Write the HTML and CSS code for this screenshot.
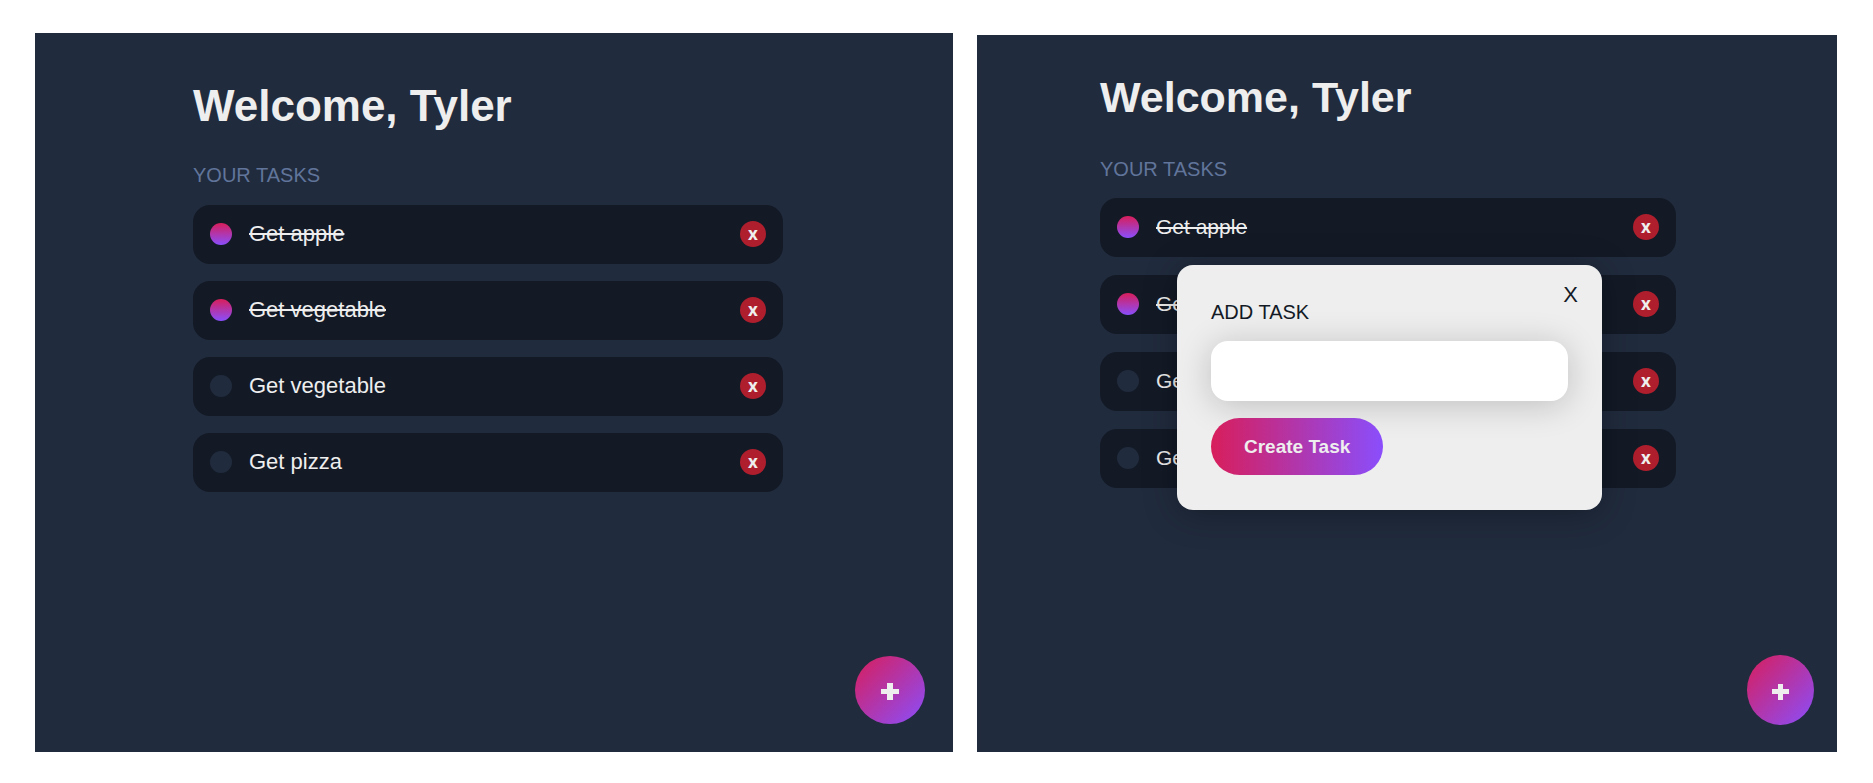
FILE: index.html
```html
<!DOCTYPE html>
<html lang="en">
<head>
<meta charset="utf-8">
<meta name="viewport" content="width=device-width, initial-scale=1">
<title>Tasks</title>
<link rel="stylesheet" href="styles.css">
</head>
<body>
<main class="screens">
  <section class="app">
    <h1 class="welcome">Welcome, Tyler</h1>
    <h2 class="subtitle">Your tasks</h2>
    <ul class="tasks">
      <li class="task"><input class="check" type="checkbox" id="a1" checked><label class="text" for="a1">Get apple</label><button class="delete" type="button" aria-label="Delete">x</button></li>
      <li class="task"><input class="check" type="checkbox" id="a2" checked><label class="text" for="a2">Get vegetable</label><button class="delete" type="button" aria-label="Delete">x</button></li>
      <li class="task"><input class="check" type="checkbox" id="a3"><label class="text" for="a3">Get vegetable</label><button class="delete" type="button" aria-label="Delete">x</button></li>
      <li class="task"><input class="check" type="checkbox" id="a4"><label class="text" for="a4">Get pizza</label><button class="delete" type="button" aria-label="Delete">x</button></li>
    </ul>
    <button class="add" type="button" aria-label="Add task"><svg class="plus" viewBox="0 0 18 18" aria-hidden="true"><path d="M6 0h6v6h6v5h-6v6H6v-6H0V6h6z"/></svg></button>
  </section>

  <section class="app app-adding">
    <h1 class="welcome">Welcome, Tyler</h1>
    <h2 class="subtitle">Your tasks</h2>
    <ul class="tasks">
      <li class="task"><input class="check" type="checkbox" id="b1" checked><label class="text" for="b1">Get apple</label><button class="delete" type="button" aria-label="Delete">x</button></li>
      <li class="task"><input class="check" type="checkbox" id="b2" checked><label class="text" for="b2">Get vegetable</label><button class="delete" type="button" aria-label="Delete">x</button></li>
      <li class="task"><input class="check" type="checkbox" id="b3"><label class="text" for="b3">Get vegetable</label><button class="delete" type="button" aria-label="Delete">x</button></li>
      <li class="task"><input class="check" type="checkbox" id="b4"><label class="text" for="b4">Get pizza</label><button class="delete" type="button" aria-label="Delete">x</button></li>
    </ul>
    <button class="add" type="button" aria-label="Add task"><svg class="plus" viewBox="0 0 18 18" aria-hidden="true"><path d="M6 1h5v5h6v5h-6v6H6v-6H0V6h6z"/></svg></button>
    <form class="popup">
      <button class="close" type="button" aria-label="Close">X</button>
      <label class="popup-title" for="new-task">Add task</label>
      <input class="field" type="text" id="new-task">
      <button class="create" type="button">Create Task</button>
    </form>
  </section>
</main>
</body>
</html>
```

FILE: styles.css
```css
:root {
  --primary: #d81e5b;
  --secondary: #8a4efc;
  --light: #eee;
  --light-alt: #61759b;
  --dark: #131a26;
  --dark-alt: #202b3d;
  --danger: #af1e2d;
}

* {
  margin: 0;
  padding: 0;
  box-sizing: border-box;
  font-family: "Liberation Sans", Arial, sans-serif;
}

body {
  background: #fff;
  color: var(--light);
}

button {
  border: 0;
  cursor: pointer;
}

.screens {
  display: grid;
  grid-template-columns: 918fr 860fr;
  gap: 24px;
  min-height: 100vh;
  padding: 33px 36px 31px 35px;
}

.app {
  position: relative;
  padding: 47px 170px 32px 158px;
  background: var(--dark-alt);
}

.app-adding {
  margin-top: 2px;
  padding: 36px 161px 32px 123px;
}

.welcome {
  margin-bottom: 31px;
  font-size: 44px;
  line-height: 52px;
}

.app-adding .welcome {
  margin-bottom: 34px;
  font-size: 43px;
}

.subtitle {
  margin-bottom: 18px;
  color: var(--light-alt);
  font-size: 20px;
  font-weight: 400;
  line-height: 24px;
  text-transform: uppercase;
}

.app-adding .subtitle {
  margin-bottom: 17px;
}

.tasks {
  display: grid;
  gap: 17px;
  list-style: none;
}

.app-adding .tasks {
  gap: 18px;
}

.task {
  display: flex;
  align-items: center;
  gap: 17px;
  padding: 16px 17px 17px;
  border-radius: 17px;
  background: var(--dark);
}

.check {
  appearance: none;
  width: 22px;
  height: 22px;
  border-radius: 50%;
  background: var(--dark-alt);
}

.check:checked {
  background: linear-gradient(to bottom, var(--primary), var(--secondary));
}

.text {
  flex: 1;
  font-size: 22px;
  line-height: 26px;
}

.app-adding .text {
  font-size: 21px;
}

.check:checked + .text {
  text-decoration: line-through;
}

.delete {
  width: 26px;
  height: 26px;
  border-radius: 50%;
  background: var(--danger);
  color: var(--light);
  font: 700 17px/24px "Open Sans", sans-serif;
}

.add {
  position: absolute;
  right: 28px;
  bottom: 28px;
  display: grid;
  place-content: center;
  width: 70px;
  height: 68px;
  border-radius: 50%;
  background: linear-gradient(to bottom right, var(--primary), var(--secondary));
  color: var(--light);
}

.app-adding .add {
  right: 23px;
  bottom: 27px;
  width: 67px;
  height: 70px;
}

.plus {
  width: 18px;
  height: 18px;
  margin-top: 3px;
  fill: currentColor;
}

.popup {
  position: absolute;
  top: 230px;
  left: 200px;
  right: 235px;
  display: flex;
  flex-direction: column;
  align-items: flex-start;
  padding: 35px 34px;
  border-radius: 16px;
  background: var(--light);
  color: var(--dark);
  box-shadow: 0 4px 34px rgba(0, 0, 0, 0.3);
}

.close {
  position: absolute;
  top: 17px;
  right: 24px;
  background: none;
  color: var(--dark);
  font-size: 22px;
  line-height: 26px;
}

.popup-title {
  margin-bottom: 17px;
  font-size: 20px;
  line-height: 24px;
  text-transform: uppercase;
}

.field {
  width: 100%;
  height: 60px;
  margin-bottom: 17px;
  padding: 16px;
  border: 0;
  border-radius: 17px;
  outline: 0;
  background: #fff;
  color: var(--dark);
  font-size: 20px;
  box-shadow: 0 4px 34px rgba(0, 0, 0, 0.2);
}

.create {
  padding: 17px 33px;
  border-radius: 29px;
  background: linear-gradient(to right, var(--primary), var(--secondary));
  color: var(--light);
  font-size: 19px;
  font-weight: 700;
  line-height: 23px;
}
```
